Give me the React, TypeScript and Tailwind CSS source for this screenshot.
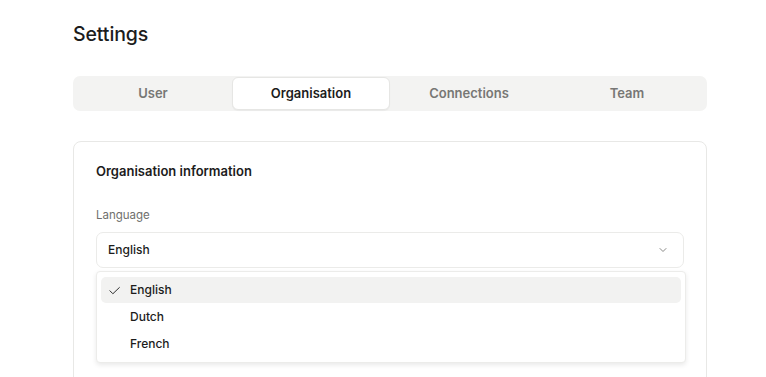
import React from "react";

export default function App() {
  const tabs = ["User", "Organisation", "Connections", "Team"];
  return (
    <div className="min-h-screen bg-white text-[#1c1c1c]" style={{ fontFamily: "Inter, 'Noto Sans', sans-serif" }}>
      <div className="pl-[73px] pt-[22px] w-[707px]">
        <h1 className="text-[19.5px] leading-[24px] font-medium tracking-[-0.1px]">Settings</h1>
        <div className="mt-[30px] h-[35px] rounded-[7px] bg-[#f3f3f2] grid grid-cols-4 p-[1px]">
          {tabs.map((t) => (
            <div
              key={t}
              className={
                t === "Organisation"
                  ? "flex items-center justify-center rounded-[6px] bg-white border border-[#e6e6e4] text-[13px] font-semibold text-[#1c1c1c] shadow-[0_1px_1px_rgba(0,0,0,0.04)]"
                  : "flex items-center justify-center text-[13px] font-semibold text-[#777775]"
              }
            >
              {t}
            </div>
          ))}
        </div>
        <div className="mt-[30px] rounded-[8px] border border-[#e8e8e6] px-[22px] pt-[19px] h-[300px]">
          <div className="text-[13px] leading-[20px] font-semibold text-[#1c1c1c]">Organisation information</div>
          <div className="mt-[27px] text-[11.5px] leading-[14px] text-[#6f6f6d]">Language</div>
          <div className="relative mt-[10px]">
            <div className="h-[36px] rounded-[7px] border border-[#ebebe9] flex items-center justify-between pl-[11px] pr-[14px]">
              <span className="text-[12px] font-medium text-[#1c1c1c]">English</span>
              <svg width="12" height="12" viewBox="0 0 24 24" fill="none" stroke="#8a8a88" strokeWidth="2" strokeLinecap="round" strokeLinejoin="round">
                <path d="M6 9l6 6 6-6" />
              </svg>
            </div>
            <div className="absolute left-0 right-[-2px] top-[39px] rounded-[4px] border border-[#ececea] bg-white shadow-[0_2px_5px_rgba(0,0,0,0.09)] pt-[5px] pb-[4px] px-[4px] z-10">
              {["English", "Dutch", "French"].map((l, i) => (
                <div
                  key={l}
                  className={
                    "h-[26px] mb-[1px] rounded-[5px] flex items-center text-[12px] font-medium text-[#1c1c1c] " +
                    (i === 0 ? "bg-[#f2f2f1]" : "")
                  }
                >
                  <span className="w-[29px] flex justify-end pr-[9px]">
                    {i === 0 && (
                      <svg width="13" height="13" viewBox="0 0 24 24" fill="none" stroke="#1c1c1c" strokeWidth="1.7" strokeLinecap="round" strokeLinejoin="round">
                        <path d="M3.5 12.5l5.5 5.5L21 6.5" />
                      </svg>
                    )}
                  </span>
                  <span>{l}</span>
                </div>
              ))}
            </div>
          </div>
        </div>
      </div>
    </div>
  );
}
